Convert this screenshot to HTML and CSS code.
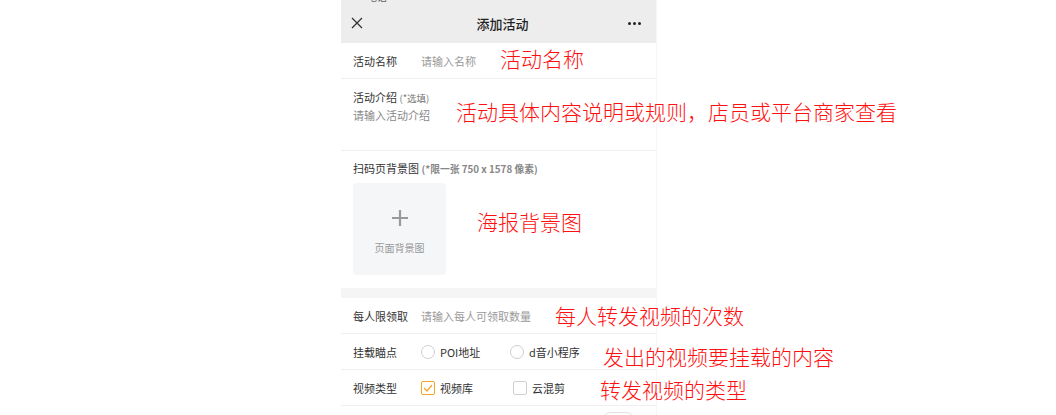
FILE: index.html
```html
<!DOCTYPE html>
<html lang="zh-CN">
<head>
  <meta charset="UTF-8">
  <meta name="viewport" content="width=device-width, initial-scale=1.0">
  <title>添加活动</title>
  <link rel="stylesheet" href="styles.css">
</head>
<body>
  <div class="stage">
    <div class="phone">
      <div class="status"><span>电话</span></div>
      <header class="topbar">
        <svg class="close" width="12" height="12" viewBox="0 0 12 12"><path d="M1 1L11 11M11 1L1 11" stroke="#333" stroke-width="1.3" fill="none"/></svg>
        <div class="title">添加活动</div>
        <div class="more"><i></i><i></i><i></i></div>
      </header>

      <div class="row">
        <div class="label">活动名称</div>
        <div class="placeholder">请输入名称</div>
      </div>

      <div class="block intro">
        <div class="label">活动介绍 <small>(*选填)</small></div>
        <div class="placeholder">请输入活动介绍</div>
      </div>

      <div class="block bg-image">
        <div class="label">扫码页背景图 <small class="bold">(*限一张 750 x 1578 像素)</small></div>
        <div class="upload">
          <svg width="18" height="18" viewBox="0 0 18 18"><path d="M9 1V17M1 9H17" stroke="#999" stroke-width="2.2" fill="none"/></svg>
          <span>页面背景图</span>
        </div>
      </div>

      <div class="gap"></div>

      <div class="row">
        <div class="label">每人限领取</div>
        <div class="placeholder">请输入每人可领取数量</div>
      </div>

      <div class="row">
        <div class="label">挂载瞄点</div>
        <div class="option first"><span class="radio"></span>POI地址</div>
        <div class="option"><span class="radio"></span>d音小程序</div>
      </div>

      <div class="row">
        <div class="label">视频类型</div>
        <div class="option first wide">
          <span class="check on"><svg width="10" height="8" viewBox="0 0 10 8"><path d="M1 4L4 7L9 1" stroke="#f5a623" stroke-width="1.3" fill="none"/></svg></span>视频库
        </div>
        <div class="option"><span class="check"></span>云混剪</div>
      </div>

      <div class="row last">
        <span class="toggle"></span>
      </div>
    </div>

    <div class="note n1">活动名称</div>
    <div class="note n2">活动具体内容说明或规则，店员或平台商家查看</div>
    <div class="note n3">海报背景图</div>
    <div class="note n4">每人转发视频的次数</div>
    <div class="note n5">发出的视频要挂载的内容</div>
    <div class="note n6">转发视频的类型</div>
  </div>
</body>
</html>
```

FILE: styles.css
```css
* {
  margin: 0;
  padding: 0;
  box-sizing: border-box;
}
body {
  width: 1056px;
  height: 415px;
  overflow: hidden;
  background: #fff;
  font-family: "Noto Sans CJK SC", "Noto Sans", sans-serif;
  color: #333;
}
.stage {
  position: relative;
  height: 415px;
  overflow: hidden;
}
.phone {
  margin-left: 341px;
  width: 316px;
  margin-top: -9px;
  border-right: 1px solid #f6f6f6;
  font-size: 11px;
}
.status {
  height: 12px;
  background: #ededed;
  padding-left: 26px;
  font-size: 10px;
  line-height: 12px;
  color: #666;
  overflow: hidden;
}
.topbar {
  height: 40px;
  background: #ededed;
  display: flex;
  align-items: center;
  justify-content: space-between;
  padding: 0 15px 0 10px;
}
.title {
  font-size: 13px;
  font-weight: 500;
  color: #222;
  margin-left: 14px;
}
.more {
  display: flex;
  gap: 2px;
}
.more i {
  width: 3px;
  height: 3px;
  border-radius: 50%;
  background: #222;
}
.row {
  height: 36px;
  display: flex;
  align-items: center;
  padding-left: 12px;
  border-bottom: 1px solid #efefef;
}
.label {
  width: 68px;
  flex-shrink: 0;
  color: #333;
}
.placeholder {
  color: #9a9a9a;
}
.block {
  padding: 10px 12px 0;
  border-bottom: 1px solid #efefef;
}
.block .label {
  width: auto;
  line-height: 16px;
}
.block small {
  font-size: 9.5px;
  color: #777;
}
.block small.bold {
  font-size: 9.8px;
  font-weight: 700;
  color: #888;
}
.intro {
  height: 72px;
}
.intro .placeholder {
  margin-top: 1px;
  line-height: 16px;
  color: #888;
}
.bg-image {
  height: 137px;
  padding-top: 9px;
  border-bottom: none;
}
.upload {
  width: 93px;
  height: 92px;
  margin-top: 6px;
  background: #f5f6f8;
  border-radius: 4px;
  display: flex;
  flex-direction: column;
  align-items: center;
  padding-top: 26px;
  gap: 13px;
}
.upload span {
  font-size: 10px;
  color: #999;
}
.gap {
  height: 10px;
  background: #f5f5f5;
}
.option {
  display: flex;
  align-items: center;
  gap: 5px;
}
.option.first {
  width: 89px;
}
.option.first.wide {
  width: 92px;
}
.radio {
  width: 14px;
  height: 14px;
  border: 1px solid #cfcfcf;
  border-radius: 50%;
}
.check {
  width: 14px;
  height: 14px;
  border: 1px solid #cfcfcf;
  border-radius: 2px;
  display: flex;
  align-items: center;
  justify-content: center;
}
.check.on {
  border-color: #f5a623;
}
.row.last {
  border-bottom: none;
  align-items: flex-start;
  padding-top: 6px;
  justify-content: flex-end;
  padding-right: 20px;
}
.toggle {
  width: 35px;
  height: 20px;
  border: 1px solid #e2e2e2;
  border-radius: 10px;
}
.note {
  position: absolute;
  color: #ff1010;
  font-size: 21px;
  font-weight: 300;
  line-height: 1;
  white-space: nowrap;
}
.n1 { left: 500px; top: 48px; }
.n2 { left: 456px; top: 101px; }
.n3 { left: 477px; top: 211px; }
.n4 { left: 555px; top: 305px; }
.n5 { left: 603px; top: 346px; }
.n6 { left: 600px; top: 379px; }
```
